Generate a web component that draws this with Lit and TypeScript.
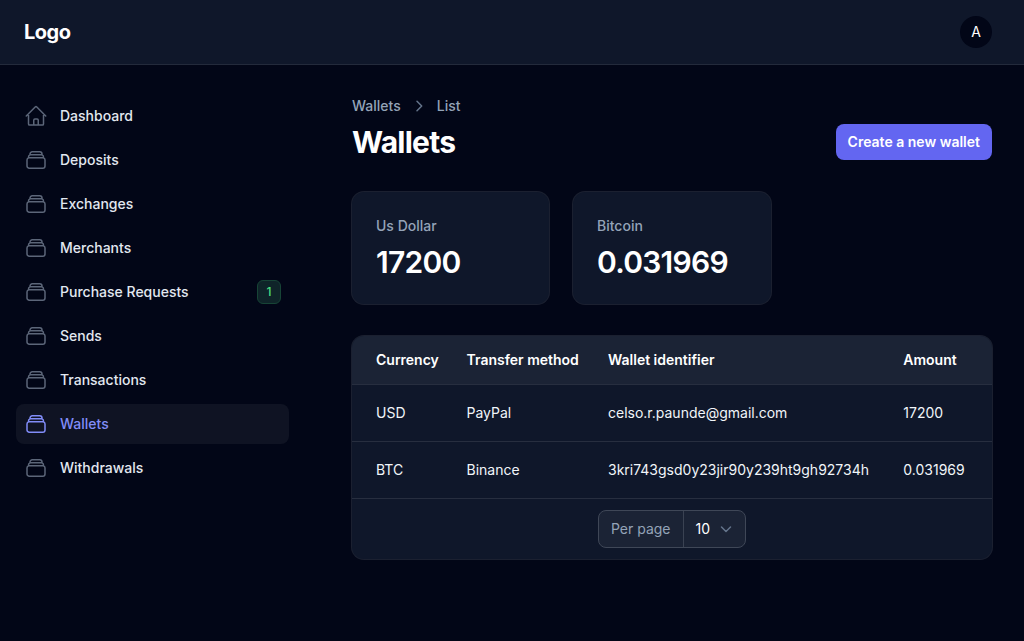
import { LitElement, html, css, svg } from "lit";
import { customElement } from "lit/decorators.js";

const home = svg`<path stroke-linecap="round" stroke-linejoin="round" d="M2.25 12l8.954-8.955c.44-.439 1.152-.439 1.591 0L21.75 12M4.5 9.75v10.125c0 .621.504 1.125 1.125 1.125H9.75v-4.875c0-.621.504-1.125 1.125-1.125h2.25c.621 0 1.125.504 1.125 1.125V21h4.125c.621 0 1.125-.504 1.125-1.125V9.75M8.25 21h8.25"/>`;
const stack = svg`<path stroke-linecap="round" stroke-linejoin="round" d="M6 6.878V6a2.25 2.25 0 012.25-2.25h7.5A2.25 2.25 0 0118 6v.878m-12 0c.235-.083.487-.128.75-.128h10.5c.263 0 .515.045.75.128m-12 0A2.25 2.25 0 004.5 9v.878m13.5-3A2.25 2.25 0 0119.5 9v.878m0 0a2.246 2.246 0 00-.75-.128H5.25c-.263 0-.515.045-.75.128m15 0A2.25 2.25 0 0121 12v6a2.25 2.25 0 01-2.25 2.25H5.25A2.25 2.25 0 013 18v-6c0-.98.626-1.813 1.5-2.122"/>`;

const nav = [
  { label: "Dashboard", icon: home },
  { label: "Deposits", icon: stack },
  { label: "Exchanges", icon: stack },
  { label: "Merchants", icon: stack },
  { label: "Purchase Requests", icon: stack, badge: "1" },
  { label: "Sends", icon: stack },
  { label: "Transactions", icon: stack },
  { label: "Wallets", icon: stack, active: true },
  { label: "Withdrawals", icon: stack },
];

const rows = [
  ["USD", "PayPal", "celso.r.paunde@gmail.com", "17200"],
  ["BTC", "Binance", "3kri743gsd0y23jir90y239ht9gh92734h", "0.031969"],
];

@customElement("app-root")
export class AppRoot extends LitElement {
  static styles = css`
    :host { display: block; width: 1024px; height: 641px; overflow: hidden; background: #020617; color: #fff; font-family: Inter, "Liberation Sans", sans-serif; font-size: 14px; line-height: 20px; }
    * { box-sizing: border-box; }
    .top { height: 65px; background: #0f172a; border-bottom: 1px solid #232a3b; display: flex; align-items: center; justify-content: space-between; padding: 0 32px 0 24px; }
    .logo { font-size: 20px; line-height: 28px; font-weight: 700; letter-spacing: -0.5px; }
    .avatar { width: 32px; height: 32px; border-radius: 50%; background: #020617; display: flex; align-items: center; justify-content: center; font-size: 14px; color: #fff; }
    .body { display: flex; }
    .side { width: 305px; padding: 31px 16px 0; display: flex; flex-direction: column; gap: 4px; }
    .item { height: 40px; border-radius: 8px; display: flex; align-items: center; gap: 12px; padding: 0 8px; color: #e2e8f0; font-weight: 500; }
    .item svg { width: 24px; height: 24px; fill: none; stroke: #5c6679; stroke-width: 1.5; flex: none; }
    .item span.t { flex: 1; }
    .item.active { background: #0f1323; color: #818cf8; }
    .item.active svg { stroke: #818cf8; }
    .badge { width: 24px; height: 24px; border-radius: 6px; background: #0f2429; border: 1px solid #174436; color: #4ade80; display: flex; align-items: center; justify-content: center; font-size: 12px; font-weight: 500; }
    .main { width: 640px; margin-left: 47px; padding-top: 31px; }
    .crumbs { display: flex; align-items: center; gap: 12px; color: #94a3b8; font-weight: 500; height: 20px; }
    .crumbs svg { width: 12px; height: 12px; fill: none; stroke: #64748b; stroke-width: 1.5; }
    .head { display: flex; justify-content: space-between; align-items: center; margin-top: 8px; }
    h1 { margin: 0; font-size: 30px; line-height: 36px; font-weight: 700; letter-spacing: -0.75px; }
    .btn { height: 36px; padding: 0 12px; border-radius: 8px; background: #6366f1; display: flex; align-items: center; font-weight: 600; color: #fff; }
    .cards { display: flex; gap: 24px; margin-top: 32px; }
    .card { width: 197px; height: 112px; background: #0f172a; box-shadow: 0 0 0 1px #1b2030; border-radius: 12px; padding: 24px; }
    .card:nth-child(2) { width: 198px; }
    .card .l { color: #94a3b8; font-weight: 500; height: 20px; }
    .card .v { font-size: 30px; line-height: 36px; font-weight: 600; margin-top: 8px; letter-spacing: -0.75px; }
    .tbl { margin-top: 32px; background: #0f172a; box-shadow: 0 0 0 1px #1b2030; border-radius: 12px; overflow: hidden; }
    .row { display: grid; grid-template-columns: 90.5px 141.5px 295.3px 1fr; padding-left: 24px; align-items: center; border-bottom: 1px solid #272e3f; height: 57px; color: #f1f5f9; }
    .row.h { height: 49px; background: #1b2335; font-weight: 600; color: #fff; }
    .foot { height: 60px; display: flex; align-items: center; justify-content: center; }
    .pp { display: flex; height: 38px; border: 1px solid #3f4757; border-radius: 8px; background: #1b2335; align-items: stretch; }
    .pp .a { display: flex; align-items: center; padding: 0 12px; color: #94a3b8; border-right: 1px solid #3a4252; }
    .pp .b { display: flex; align-items: center; padding: 0 12px; gap: 9px; color: #fff; }
    .pp svg { width: 14px; height: 14px; fill: none; stroke: #64748b; stroke-width: 1.5; }
  `;

  render() {
    return html`
      <div class="top">
        <div class="logo">Logo</div>
        <div class="avatar">A</div>
      </div>
      <div class="body">
        <nav class="side">
          ${nav.map(
            (n) => html`<div class="item ${n.active ? "active" : ""}">
              <svg viewBox="0 0 24 24">${n.icon}</svg>
              <span class="t">${n.label}</span>
              ${n.badge ? html`<span class="badge">${n.badge}</span>` : ""}
            </div>`
          )}
        </nav>
        <main class="main">
          <div class="crumbs">
            <span>Wallets</span>
            <svg viewBox="0 0 12 12"><path d="M4 1.3 8.7 6 4 10.7" stroke-linecap="round" stroke-linejoin="round"/></svg>
            <span>List</span>
          </div>
          <div class="head">
            <h1>Wallets</h1>
            <div class="btn">Create a new wallet</div>
          </div>
          <div class="cards">
            <div class="card"><div class="l">Us Dollar</div><div class="v">17200</div></div>
            <div class="card"><div class="l">Bitcoin</div><div class="v">0.031969</div></div>
          </div>
          <div class="tbl">
            <div class="row h"><span>Currency</span><span>Transfer method</span><span>Wallet identifier</span><span>Amount</span></div>
            ${rows.map((r) => html`<div class="row">${r.map((c) => html`<span>${c}</span>`)}</div>`)}
            <div class="foot">
              <div class="pp">
                <div class="a">Per page</div>
                <div class="b">10 <svg viewBox="0 0 14 14"><path d="M2.5 5 7 9.5 11.5 5" stroke-linecap="round" stroke-linejoin="round"/></svg></div>
              </div>
            </div>
          </div>
        </main>
      </div>
    `;
  }
}
